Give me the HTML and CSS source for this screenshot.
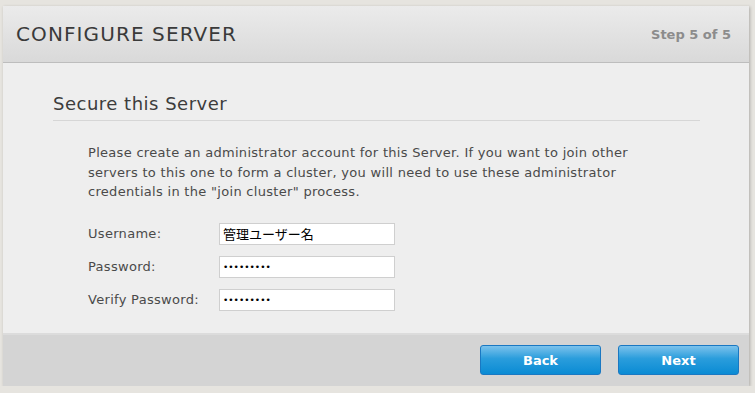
FILE: index.html
```html
<!DOCTYPE html>
<html lang="en">
<head>
  <meta charset="UTF-8">
  <title>Configure Server</title>
  <link rel="stylesheet" href="styles.css">
</head>
<body>
  <div class="wizard">
    <div class="wizard-header">
      <h1>CONFIGURE SERVER</h1>
      <span class="step">Step 5 of 5</span>
    </div>

    <div class="wizard-body">
      <h2>Secure this Server</h2>
      <div class="section">
        <p>Please create an administrator account for this Server. If you want to join other
          servers to this one to form a cluster, you will need to use these administrator
          credentials in the "join cluster" process.</p>

        <form class="creds">
          <div class="row">
            <label for="username">Username:</label>
            <input type="text" id="username" value="管理ユーザー名">
          </div>
          <div class="row">
            <label for="password">Password:</label>
            <input type="password" class="secret" id="password" value="123456789">
          </div>
          <div class="row">
            <label for="verify">Verify Password:</label>
            <input type="password" class="secret" id="verify" value="123456789">
          </div>
        </form>
      </div>
    </div>

    <div class="wizard-footer">
      <button class="btn">Back</button>
      <button class="btn">Next</button>
    </div>
  </div>
</body>
</html>
```

FILE: styles.css
```css
body {
  margin: 0;
  background: #e6e4df;
  font-family: "DejaVu Sans", Verdana, sans-serif;
}

.wizard {
  margin: 6px 6px 0 3px;
  width: 746px;
  background: #eeeeee;
  box-shadow: 1px 1px 3px rgba(0, 0, 0, 0.25);
}

.wizard-header {
  height: 56px;
  display: flex;
  justify-content: space-between;
  align-items: center;
  padding: 0 18px 0 13px;
  background: linear-gradient(#ebebeb, #d9d9d9);
  border-bottom: 1px solid #bdbdbd;
}

.wizard-header h1 {
  margin: 0;
  font-size: 20px;
  letter-spacing: 1.1px;
  font-weight: normal;
  color: #3a3a3a;
}

.step {
  font-size: 13px;
  font-weight: bold;
  color: #8c8c8c;
}

.wizard-body {
  padding: 30px 49px 11px 50px;
}

.wizard-body h2 {
  margin: 0;
  padding-bottom: 6px;
  font-size: 18px;
  letter-spacing: 0.5px;
  font-weight: normal;
  color: #3c3c3c;
  border-bottom: 1px solid #d6d6d6;
}

.section {
  padding: 22px 0 0 35px;
  color: #4a4a4a;
  font-size: 13px;
  letter-spacing: 0.3px;
}

.section p {
  margin: 0 0 21px;
  width: 580px;
  line-height: 19.5px;
}

.row {
  display: flex;
  align-items: center;
  height: 22px;
  margin-bottom: 11px;
}

.row label {
  width: 131px;
}

.row input {
  box-sizing: border-box;
  width: 176px;
  height: 22px;
  padding: 0 3px;
  border: 1px solid #cfcfcf;
  background: #fff;
  font-family: "DejaVu Sans", "Noto Sans CJK JP", sans-serif;
  font-size: 13px;
  letter-spacing: 0;
  color: #000;
}

.row input.secret {
  font-size: 9px;
}

.wizard-footer {
  height: 51px;
  display: flex;
  justify-content: flex-end;
  align-items: center;
  gap: 17px;
  padding-right: 10px;
  background: #d4d4d4;
  border-top: 2px solid #dcdcdc;
}

.btn {
  width: 121px;
  height: 30px;
  border: 1px solid #1a78c2;
  border-radius: 3px;
  background: linear-gradient(#7cc2ec, #2a9ddc 45%, #0a8bd4);
  color: #fff;
  font-family: "DejaVu Sans", Tahoma, sans-serif;
  font-size: 13px;
  font-weight: bold;
  cursor: pointer;
}
```
